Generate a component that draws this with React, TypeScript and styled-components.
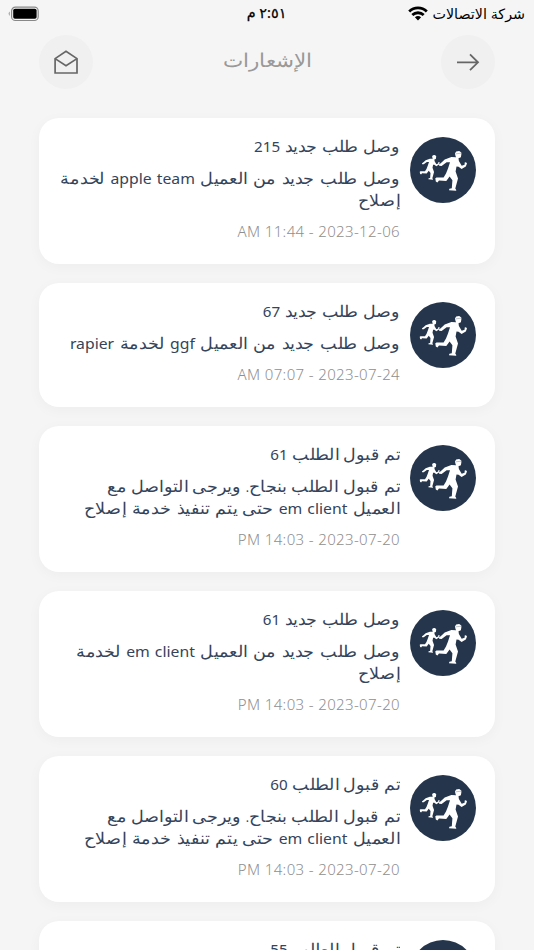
import React from "react";
import styled, { createGlobalStyle } from "styled-components";

const GlobalStyle = createGlobalStyle`
  * { box-sizing: border-box; }
  body { margin: 0; background: #f5f5f5; overflow: hidden; }
`;
const Screen = styled.div`
  width: 534px; height: 950px; overflow: hidden; direction: rtl; background: #f5f5f5;
  font-family: "Noto Sans", "DejaVu Sans", sans-serif; color: #34445a;
`;
const StatusBar = styled.div`
  height: 28px; padding: 0 9px 0 8px; display: grid; grid-template-columns: 1fr auto 1fr; align-items: center;
  color: #000; font-size: 14.3px;
`;
const Carrier = styled.div`display: flex; align-items: center; gap: 4px; white-space: nowrap; line-height: 24px;`;
const Clock = styled.div`
  font-size: 14.4px; line-height: 24px; white-space: nowrap; padding-bottom: 2px; -webkit-text-stroke: 0.25px #000;
`;
const BatterySlot = styled.div`display: flex; justify-content: flex-end; padding-bottom: 1px;`;
const Header = styled.header`
  height: 90px; padding: 7px 39px 0; display: flex; justify-content: space-between; align-items: flex-start;
`;
const RoundButton = styled.button`
  width: 54px; height: 54px; border: 0; padding: 0; border-radius: 50%; background: #f0f0f0;
  display: flex; align-items: center; justify-content: center; color: #666;
`;
const Title = styled.h1`
  margin: 0; font-size: 19px; font-weight: 300; line-height: 51px; color: #999; transform: scaleX(1.13);
`;
const List = styled.main`padding: 0 39px; display: flex; flex-direction: column; gap: 19.5px;`;
const Card = styled.article<{ $tall: boolean }>`
  height: ${p => (p.$tall ? 145.6 : 123.6)}px; flex: none; border-radius: 20px; background: #fff;
  box-shadow: 0 3px 14px rgba(0,0,0,.035); padding: 19px 19px 0; display: flex; gap: 10px;
`;
const Avatar = styled.div`width: 66px; height: 66px; flex: none; border-radius: 50%; background: #25364c;`;
const Copy = styled.div`
  flex: 1; margin-top: -2px; font-size: 16px; font-weight: 300; white-space: nowrap;
`;
const Heading = styled.h2`
  margin: 0; font: inherit; line-height: 22px; height: 22px; transform: scaleX(1.085); transform-origin: right;
`;
const Body = styled.p`margin: 10px 0 9px;`;
const Line = styled.span<{ $mixed: boolean }>`
  display: block; height: 22px; line-height: 22px; transform: scaleX(1.095); transform-origin: right;
  word-spacing: ${p => (p.$mixed ? 0.9 : 0)}px;
`;
const Latin = styled.bdi<{ $size: number }>`font-size: ${p => p.$size}px; font-weight: 400;`;
const Time = styled.time`
  display: block; line-height: 22px; color: #8f8f8f; font-size: 15px; letter-spacing: .36px;
`;

const Wifi = () => (
  <svg width="20" height="16" viewBox="0 0 20 16" fill="none" stroke="#000" strokeWidth="2.8">
    <path d="M1.2 5.5C6.1.7 13.9.7 18.8 5.5" />
    <path d="M4.3 9C7.5 6 12.5 6 15.7 9" />
    <path d="M6.9 11.3Q10 8.8 13.1 11.3L10 14.6Z" fill="#000" stroke="none" />
  </svg>
);
const Battery = () => (
  <svg width="31" height="16" viewBox="0 0 31 16">
    <rect x="3.6" y="1.1" width="26.6" height="13.4" rx="3.8" fill="none" stroke="#888" strokeWidth="1.2" />
    <rect x="5.2" y="2.8" width="23.4" height="10" rx="1.8" fill="#000" />
    <path d="M1.6 5.6Q-.2 7.8 1.6 10Z" fill="#888" />
  </svg>
);
const Arrow = () => (
  <svg width="24" height="24" viewBox="0 0 24 24" fill="none" stroke="currentColor" strokeWidth="1.8">
    <path d="M1 12.3H22M14 4.4L22 12.3L14 20.2" />
  </svg>
);
const OpenMail = () => (
  <svg width="24" height="24" viewBox="0 0 24 24" fill="none" stroke="currentColor" strokeWidth="1.7">
    <path d="M1.1 8.6V23H23V8.6L12 1.3Z" />
    <path d="M1.1 8.6L12 15.8L23 8.6" />
  </svg>
);
const runner =
  "M45.4 18.5L44.9 16.5L46.2 14.5L49.2 14L51.3 15.5L51.4 17L50.9 20.3L48.5 21.2L48.9 24L51.7 28.8L54.6 27.7L54.7 25.6L56 25.2L57 26.6L55.8 29.4L51.6 32L48.6 29.8L46.5 29.6L45.6 34.6L48 41.5L45.3 51.4L46.4 53.3L45.9 53.8L39 53.2L39.4 51.7L41.8 51.2L42.4 43.2L39.6 39.6L36.3 44L29 43.6L27.4 45.5L25.8 44.4L25.3 41.2L26.5 40.4L33.6 40.4L36 36.5L38 31.4L40 25.2L36.6 25.3L31.6 29L29.2 28.8L28.9 27.5L30.7 26.3L34.7 22.4L41.4 20L46 20.2Z";
const Runners = () => (
  <svg width="66" height="66" viewBox="0 0 66 66" fill="#fff">
    <path d={runner} />
    <path d={runner} transform="translate(-6.2 9.3) scale(.63 .62)" />
    <path d="M45.4 16.9L51 16.2" stroke="#25364c" strokeWidth=".3" />
  </svg>
);

const MixedText = ({ text, size }: { text: string; size: number }) => (
  <>
    {text.split(/([a-z]+(?: [a-z]+)*|\d+)/).map((part, i) =>
      i % 2 ? <Latin key={i} $size={size}>{part}</Latin> : part
    )}
  </>
);

const items = [
  { title: "وصل طلب جديد 215", lines: ["وصل طلب جديد من العميل apple team لخدمة", "إصلاح"], time: "2023-12-06 - 11:44 AM" },
  { title: "وصل طلب جديد 67", lines: ["وصل طلب جديد من العميل ggf لخدمة rapier"], time: "2023-07-24 - 07:07 AM" },
  { title: "تم قبول الطلب 61", lines: ["تم قبول الطلب بنجاح. ويرجى التواصل مع", "العميل em client حتى يتم تنفيذ خدمة إصلاح"], time: "2023-07-20 - 14:03 PM" },
  { title: "وصل طلب جديد 61", lines: ["وصل طلب جديد من العميل em client لخدمة", "إصلاح"], time: "2023-07-20 - 14:03 PM" },
  { title: "تم قبول الطلب 60", lines: ["تم قبول الطلب بنجاح. ويرجى التواصل مع", "العميل em client حتى يتم تنفيذ خدمة إصلاح"], time: "2023-07-20 - 14:03 PM" },
  { title: "تم قبول الطلب 55", lines: [], time: "" },
];

export default function App() {
  return (
    <Screen>
      <GlobalStyle />
      <StatusBar>
        <Carrier>شركة الاتصالات<Wifi /></Carrier>
        <Clock>٢:٥١ م</Clock>
        <BatterySlot><Battery /></BatterySlot>
      </StatusBar>
      <Header>
        <RoundButton aria-label="رجوع"><Arrow /></RoundButton>
        <Title>الإشعارات</Title>
        <RoundButton aria-label="تحديد كمقروء"><OpenMail /></RoundButton>
      </Header>
      <List>
        {items.map((n, i) => (
          <Card key={i} $tall={n.lines.length !== 1}>
            <Avatar><Runners /></Avatar>
            <Copy>
              <Heading><MixedText text={n.title} size={14} /></Heading>
              <Body>
                {n.lines.map(l => (
                  <Line key={l} $mixed={/[a-z]/.test(l)}><MixedText text={l} size={14.4} /></Line>
                ))}
              </Body>
              <Time>{n.time}</Time>
            </Copy>
          </Card>
        ))}
      </List>
    </Screen>
  );
}
